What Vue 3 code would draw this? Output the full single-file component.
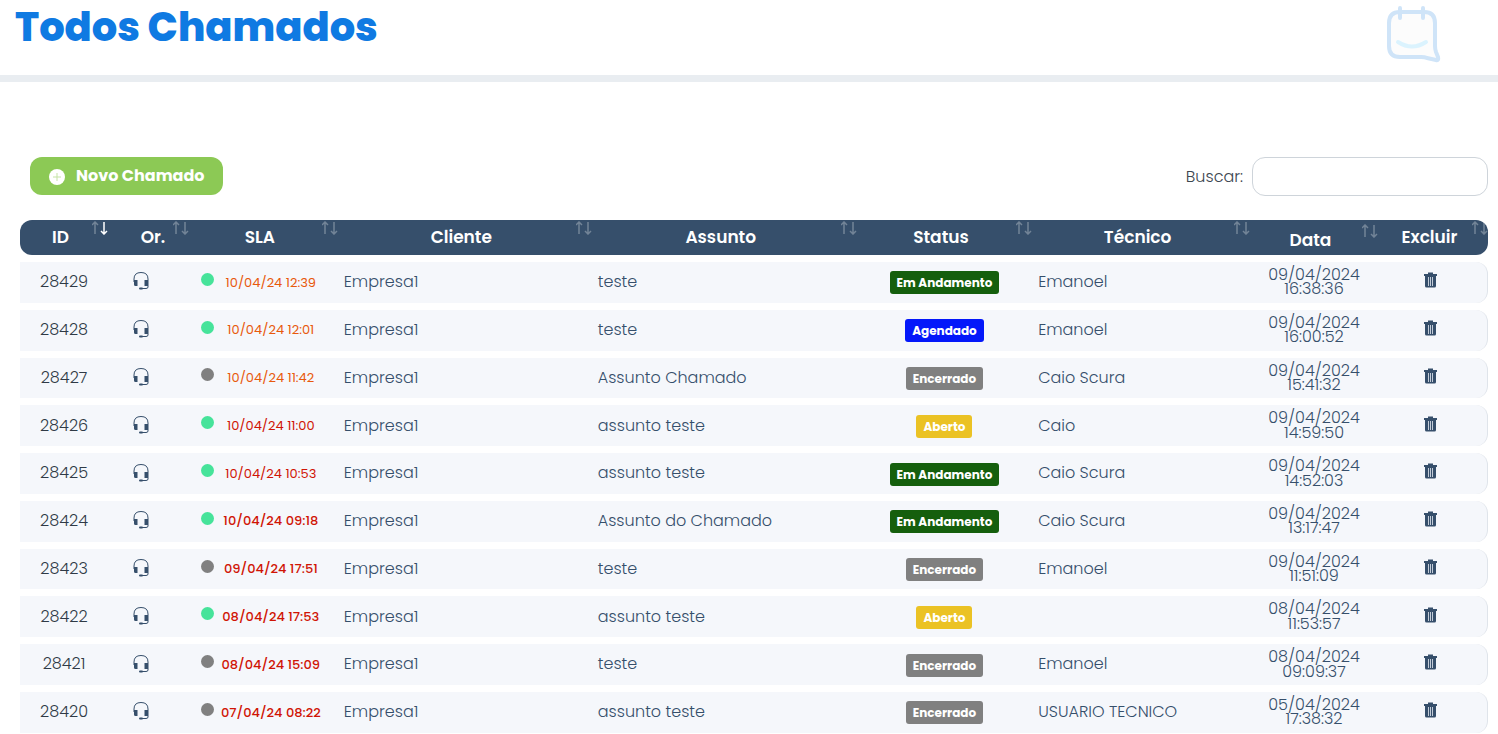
<script setup>
import { ref } from 'vue'

const search = ref('')

const columns = [
  { key: 'id', label: 'ID', sorted: true },
  { key: 'origin', label: 'Or.' },
  { key: 'sla', label: 'SLA' },
  { key: 'client', label: 'Cliente' },
  { key: 'subject', label: 'Assunto' },
  { key: 'status', label: 'Status' },
  { key: 'tech', label: 'Técnico' },
  { key: 'date', label: 'Data' },
  { key: 'remove', label: 'Excluir' },
]

const tickets = [
  { id: 28429, open: true, sla: '10/04/24 12:39', level: 'warn', subject: 'teste', status: 'Em Andamento', tech: 'Emanoel', day: '09/04/2024', time: '16:38:36' },
  { id: 28428, open: true, sla: '10/04/24 12:01', level: 'warn', subject: 'teste', status: 'Agendado', tech: 'Emanoel', day: '09/04/2024', time: '16:00:52' },
  { id: 28427, open: false, sla: '10/04/24 11:42', level: 'warn', subject: 'Assunto Chamado', status: 'Encerrado', tech: 'Caio Scura', day: '09/04/2024', time: '15:41:32' },
  { id: 28426, open: true, sla: '10/04/24 11:00', level: 'late', subject: 'assunto teste', status: 'Aberto', tech: 'Caio', day: '09/04/2024', time: '14:59:50' },
  { id: 28425, open: true, sla: '10/04/24 10:53', level: 'late', subject: 'assunto teste', status: 'Em Andamento', tech: 'Caio Scura', day: '09/04/2024', time: '14:52:03' },
  { id: 28424, open: true, sla: '10/04/24 09:18', level: 'expired', subject: 'Assunto do Chamado', status: 'Em Andamento', tech: 'Caio Scura', day: '09/04/2024', time: '13:17:47' },
  { id: 28423, open: false, sla: '09/04/24 17:51', level: 'expired', subject: 'teste', status: 'Encerrado', tech: 'Emanoel', day: '09/04/2024', time: '11:51:09' },
  { id: 28422, open: true, sla: '08/04/24 17:53', level: 'expired', subject: 'assunto teste', status: 'Aberto', tech: '', day: '08/04/2024', time: '11:53:57' },
  { id: 28421, open: false, sla: '08/04/24 15:09', level: 'expired', subject: 'teste', status: 'Encerrado', tech: 'Emanoel', day: '08/04/2024', time: '09:09:37' },
  { id: 28420, open: false, sla: '07/04/24 08:22', level: 'expired', subject: 'assunto teste', status: 'Encerrado', tech: 'USUARIO TECNICO', day: '05/04/2024', time: '17:38:32' },
]

const statusClass = {
  'Em Andamento': 'progress',
  Agendado: 'scheduled',
  Encerrado: 'closed',
  Aberto: 'opened',
}
</script>

<template>
  <header class="top">
    <h1>Todos Chamados</h1>
    <svg class="logo" width="56" height="58" viewBox="0 0 56 58" fill="none" stroke-linecap="round" stroke-linejoin="round" aria-hidden="true">
      <path d="M15 7H39Q50 7 50 18V41Q50 44 51 47L53 52Q54 56 51 55L42 53Q40 52 36 52H15Q4 52 4 41V18Q4 7 15 7Z" fill="#fcfcfc" stroke="#cfe4f8" stroke-width="4" />
      <path d="M15 3V13M38 3V13" stroke="#cfe4f8" stroke-width="4" />
      <path d="M13 37Q27 46 41 37" stroke="#dbf3fe" stroke-width="4" />
    </svg>
  </header>

  <main>
    <div class="toolbar">
      <button type="button" class="new">
        <svg width="16" height="16" viewBox="0 0 16 16" aria-hidden="true">
          <circle cx="8" cy="8" r="8" fill="#fff" />
          <path d="M8 4V12M4 8H12" stroke="#c5e3a6" stroke-width="1" />
        </svg>
        <span>Novo Chamado</span>
      </button>
      <div class="search">
        <label for="search">Buscar:</label>
        <input id="search" v-model="search" type="search" />
      </div>
    </div>

    <table>
      <colgroup>
        <col v-for="c in columns" :key="c.key" :class="'w-' + c.key" />
      </colgroup>
      <thead>
        <tr>
          <th v-for="c in columns" :key="c.key" scope="col" :class="'h-' + c.key">
            <button type="button">
              {{ c.label }}
              <svg class="sort" width="16" height="14" viewBox="0 0 16 14" fill="none" stroke="#fff" aria-hidden="true">
                <path d="M3 13V2M0 4L3 1L6 4" stroke-width="1.500" opacity=".3" />
                <path d="M12 1V12M9 10L12 13L15 10" stroke-width="1.500" :opacity="c.sorted ? 1 : 0.3" />
              </svg>
            </button>
          </th>
        </tr>
      </thead>
      <tbody>
        <tr v-for="t in tickets" :key="t.id">
          <td class="center id">{{ t.id }}</td>
          <td class="origin">
            <svg width="16" height="20" viewBox="0 0 16 20" fill="none" stroke="#364f6b" role="img" aria-label="Suporte">
              <path d="M1 11V8Q1 1.500 8 1.500T15 8V16Q15 17.500 13 17.500H8" stroke-width="1" />
              <path d="M1 9H4.500V15H2.500Q1 15 1 13.500ZM15 9H11.500V15H15Z" fill="#364f6b" stroke="none" />
              <path d="M7 17.500H9" stroke-width="2" stroke-linecap="round" />
            </svg>
          </td>
          <td class="sla-cell">
            <div class="sla">
              <span class="dot" :class="{ on: t.open }"></span>
              <span class="due" :class="t.level">{{ t.sla }}</span>
            </div>
          </td>
          <td>Empresa1</td>
          <td>{{ t.subject }}</td>
          <td class="center status"><span class="badge" :class="statusClass[t.status]">{{ t.status }}</span></td>
          <td>{{ t.tech }}</td>
          <td class="center date">{{ t.day }}<br />{{ t.time }}</td>
          <td class="remove">
            <button type="button" :aria-label="'Excluir ' + t.id">
              <svg width="13" height="16" viewBox="0 0 13 16" fill="#364f6b" aria-hidden="true">
                <path d="M4 0.500H9V2H13V4H0V2H4Z" />
                <path d="M1 4H12V14Q12 15.500 10.500 15.500H2.500Q1 15.500 1 14Z" />
                <path d="M4.500 5V14M6.500 5V14M8.500 5V14" stroke="#c3ccd8" stroke-width="1" />
              </svg>
            </button>
          </td>
        </tr>
      </tbody>
    </table>
  </main>
</template>

<style>
body {
  margin: 0;
  background: #fff;
}
</style>

<style scoped>
.top,
main {
  font-family: Poppins, Inter, sans-serif;
  color: #364f6b;
}

button,
input {
  font: inherit;
  color: inherit;
}

button {
  border: 0;
  padding: 0;
  background: none;
  cursor: pointer;
}

.top {
  display: flex;
  justify-content: space-between;
  align-items: flex-start;
  height: 75px;
  padding: 0 57px 0 15px;
  border-bottom: 7px solid #e9edf1;
}

h1 {
  margin: 0;
  font-size: 40px;
  line-height: 54px;
  font-weight: 800;
  color: #0f7ae2;
}

.logo {
  margin-top: 5px;
}

main {
  padding: 75px 10px 0 20px;
}

.toolbar {
  display: flex;
  justify-content: space-between;
  align-items: flex-start;
  padding-left: 10px;
}

.new {
  display: flex;
  align-items: center;
  gap: 11px;
  height: 38px;
  padding: 0 18px 0 19px;
  border-radius: 12px;
  background: #8cc955;
  color: #fff;
  font-size: 16px;
  font-weight: 700;
}

.new span {
  padding-bottom: 2px;
}

.new svg {
  margin-top: 2px;
}

.search {
  display: flex;
  align-items: center;
  gap: 9px;
  font-size: 16px;
  font-weight: 300;
  color: #3c4650;
}

.search input {
  box-sizing: border-box;
  width: 236px;
  height: 39px;
  padding: 0 12px;
  border: 1px solid #ced4da;
  border-radius: 13px;
  background: #fff;
}

table {
  width: 100%;
  margin-top: 17px;
  table-layout: fixed;
  border-collapse: separate;
  border-spacing: 0 7px;
  font-size: 16px;
  line-height: 0.9;
  font-weight: 300;
}

.w-id { width: 6%; }
.w-origin { width: 5.5%; }
.w-sla { width: 10.15%; }
.w-client { width: 17.3%; }
.w-subject { width: 18.05%; }
.w-status { width: 11.95%; }
.w-tech { width: 14.85%; }
.w-date { width: 8.7%; }
.w-remove { width: 7.5%; }

th {
  height: 35px;
  padding: 0;
  background: #364f6b;
  color: #fff;
  font-size: 17px;
  font-weight: 600;
}

th:first-child {
  border-radius: 12px 0 0 12px;
}

th:last-child {
  border-radius: 0 12px 12px 0;
  overflow: hidden;
}

th button {
  position: relative;
  width: 100%;
  height: 35px;
  padding-right: 7px;
}

.h-origin button {
  padding: 0 0 0 9px;
}

.h-date button {
  padding-top: 6px;
}

.sort {
  position: absolute;
  top: 1px;
  right: 0;
}

.h-date .sort {
  top: 4px;
}

td {
  padding: 6px;
  background: #f5f7fb;
}

td:last-child {
  border-right: 1px solid #dfe4ea;
  border-radius: 0 12px 12px 0;
}

.center {
  text-align: center;
}

.id {
  color: #2f3a46;
}

.origin {
  padding: 0 0 2px 25px;
}

.origin svg,
.remove svg {
  display: block;
}

.sla-cell {
  padding: 0 10px 0 12px;
}

.sla {
  display: flex;
  align-items: center;
}

.dot {
  flex: none;
  width: 13px;
  height: 13px;
  margin-bottom: 6px;
  border-radius: 50%;
  background: #808080;
}

.dot.on {
  background: #46e39a;
}

.due {
  flex: 1;
  font-size: 13px;
  text-align: center;
  white-space: nowrap;
}

.warn {
  color: #e8590c;
  font-weight: 400;
}

.late {
  color: #d01405;
  font-weight: 400;
}

.expired {
  color: #d01405;
  font-weight: 500;
}

.status {
  padding: 1px 0 0;
}

.badge {
  display: inline-block;
  padding: 5px 7px;
  border-radius: 3px;
  color: #fff;
  font-size: 12px;
  line-height: 13px;
  font-weight: 700;
}

.progress { background: #155f0d; }
.scheduled { background: #0418fa; }
.closed { background: #808080; }
.opened { background: #ebc224; }

.remove {
  padding: 0 0 2px 46px;
}
</style>
